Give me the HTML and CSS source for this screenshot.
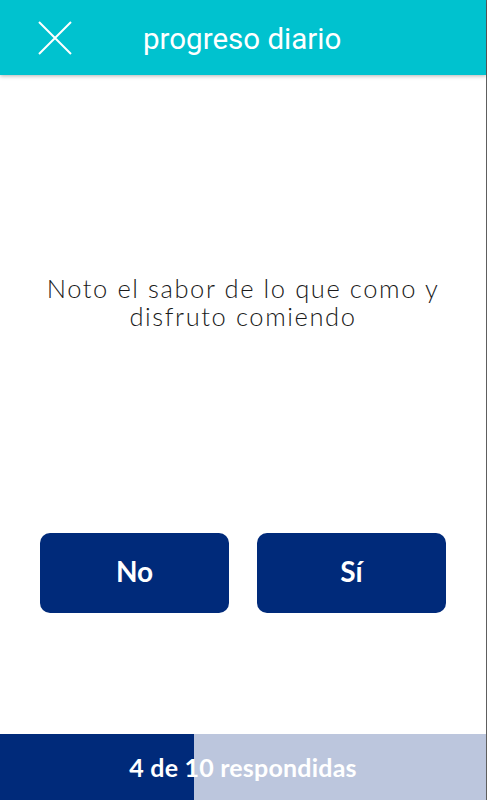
FILE: index.html
```html
<!DOCTYPE html>
<html lang="es">
<head>
<meta charset="utf-8">
<link rel="stylesheet" href="styles.css">
</head>
<body>
<div class="app">
  <header class="topbar">
    <button class="close" aria-label="cerrar">
      <svg width="34" height="34" viewBox="0 0 34 34"><path d="M1 1 L33 33 M33 1 L1 33" stroke="#fff" stroke-width="2" fill="none"/></svg>
    </button>
    <h1 class="title">progreso diario</h1>
  </header>
  <main class="content">
    <p class="question">Noto el sabor de lo que como y disfruto comiendo</p>
    <div class="answers">
      <button class="answer">No</button>
      <button class="answer">Sí</button>
    </div>
  </main>
  <footer class="progress">
    <div class="progress-fill" style="width:40%"></div>
    <span class="progress-label">4 de 10 respondidas</span>
  </footer>
</div>
</body>
</html>
```
FILE: styles.css
```css
html, body { margin: 0; padding: 0; }
body { background: #fff; font-family: "Lato", "Noto Sans", sans-serif; }
.app {
  width: 487px; height: 800px; display: flex; flex-direction: column;
  position: relative; box-shadow: inset -1px 0 0 rgba(40,40,40,0.75);
}
.topbar {
  height: 75px; background: #00c2cf; display: flex; align-items: center;
  box-shadow: 0 1px 4px rgba(0,0,0,0.3); position: relative; z-index: 1;
  margin-right: 1px;
}
.close {
  background: none; border: 0; padding: 0; margin: 0 0 0 38px;
  width: 34px; height: 34px; display: flex; cursor: pointer;
}
.title {
  margin: 3px 0 0 71px; font-family: "Roboto", sans-serif; font-weight: 400;
  font-size: 29.5px; color: #fff;
}
.content { flex: 1; display: flex; flex-direction: column; align-items: center; padding-right: 1px; }
.question {
  margin: 199px 0 0; text-align: center; font-family: "Lato", sans-serif; font-weight: 300;
  font-size: 25.5px; line-height: 28px; color: #1a1a1a; width: 440px; letter-spacing: 1.6px;
}
.answers { margin-top: 203px; display: flex; gap: 28px; }
.answer {
  width: 189px; height: 80px; border: 0; border-radius: 10px; background: #002a7a;
  color: #fff; font-family: "Lato", sans-serif; font-weight: 700; font-size: 28px;
  padding: 0 0 5px;
}
.progress {
  height: 66px; background: #bcc6dd; position: relative; display: flex;
  align-items: center; justify-content: center; margin-right: 1px;
}
.progress-fill { position: absolute; left: 0; top: 0; bottom: 0; background: #002a7a; }
.progress-label {
  position: relative; color: #fff; font-family: "Lato", sans-serif; font-weight: 700; font-size: 25px;
  letter-spacing: 0.2px;
}
```
